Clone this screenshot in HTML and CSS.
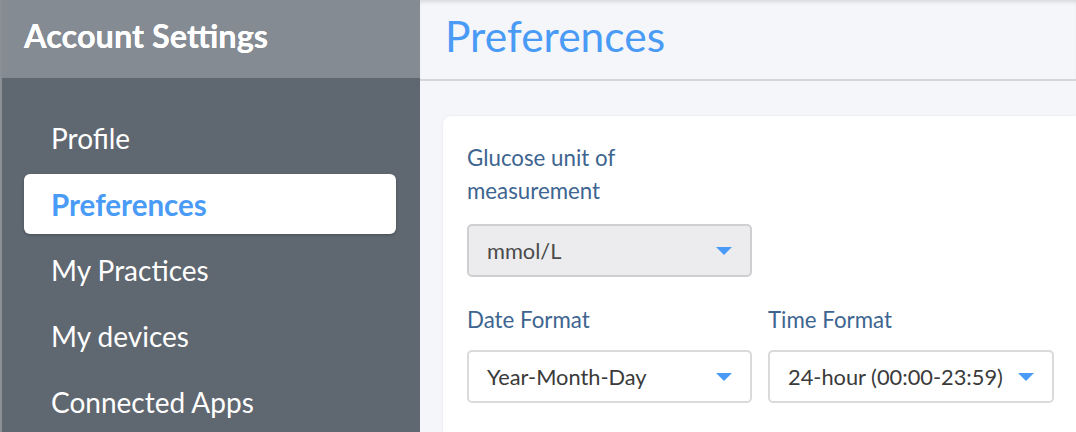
FILE: index.html
```html
<!DOCTYPE html>
<html lang="en">
<head>
<meta charset="utf-8">
<title>Preferences</title>
<link rel="stylesheet" href="styles.css">
</head>
<body>
<div class="app">
  <aside class="sidebar">
    <div class="sidebar-header">Account Settings</div>
    <nav class="nav">
      <a class="nav-item">Profile</a>
      <a class="nav-item active">Preferences</a>
      <a class="nav-item">My Practices</a>
      <a class="nav-item">My devices</a>
      <a class="nav-item">Connected Apps</a>
    </nav>
  </aside>
  <main class="main">
    <header class="page-header"><h1 class="page-title">Preferences</h1></header>
    <section class="content">
      <div class="card">
        <div class="field field-glucose">
          <label class="field-label narrow">Glucose unit of measurement</label>
          <div class="select disabled"><span>mmol/L</span><span class="caret"></span></div>
        </div>
        <div class="row">
          <div class="field">
            <label class="field-label">Date Format</label>
            <div class="select"><span>Year-Month-Day</span><span class="caret"></span></div>
          </div>
          <div class="field">
            <label class="field-label">Time Format</label>
            <div class="select wide"><span>24-hour (00:00-23:59)</span><span class="caret"></span></div>
          </div>
        </div>
      </div>
    </section>
  </main>
</div>
</body>
</html>
```

FILE: styles.css
```css
* { box-sizing: border-box; }
html, body { margin: 0; padding: 0; }
body {
  font-family: Lato, "Open Sans", sans-serif;
  width: 1076px;
  height: 432px;
  overflow: hidden;
  background: #f5f6fa;
}
.app {
  display: flex;
  height: 432px;
  overflow: hidden;
}
.sidebar {
  width: 420px;
  flex: none;
  background: #5f6770;
  border-left: 2px solid #8a8f96;
  display: flex;
  flex-direction: column;
}
.sidebar-header {
  height: 78px;
  flex: none;
  background: #858b93;
  color: #fff;
  font-weight: 700;
  font-size: 32.5px;
  padding: 0 0 8px 22px;
  display: flex;
  align-items: center;
  text-shadow: 0 0 0.6px #fff;
}
.nav {
  padding-top: 30px;
  display: flex;
  flex-direction: column;
  gap: 6px;
}
.nav-item {
  height: 60px;
  flex: none;
  margin: 0 24px 0 22px;
  padding-left: 27px;
  display: flex;
  align-items: center;
  color: #fff;
  font-size: 28px;
  border-radius: 6px;
}
.nav-item.active {
  background: #fff;
  color: #4a9bf5;
  font-weight: 700;
  font-size: 29.5px;
  box-shadow: 0 1px 3px rgba(0,0,0,0.25);
}
.main {
  flex: 1;
  display: flex;
  flex-direction: column;
  min-width: 0;
  overflow: hidden;
}
.page-header {
  height: 81px;
  flex: none;
  border-bottom: 2px solid #d5d6da;
  box-shadow: inset 0 4px 4px -2px rgba(0,0,0,0.12);
  padding-left: 25px;
  display: flex;
  align-items: center;
}
.page-title {
  margin: 0;
  font-weight: 400;
  font-size: 42.5px;
  color: #4a9bf5;
  padding-bottom: 8px;
}
.content {
  padding: 35px 0 0 23px;
  flex: 1;
  min-height: 0;
}
.card {
  background: #fff;
  border-radius: 8px 0 0 0;
  box-shadow: 0 0 3px rgba(0,0,0,0.08);
  padding: 25px 0 0 24px;
  height: 100%;
}
.field {
  display: flex;
  flex-direction: column;
}
.field-label {
  color: #3d6590;
  font-size: 22.3px;
  line-height: 33px;
}
.field-label.narrow { max-width: 200px; }
.field-glucose .select { margin-top: 17px; }
.row {
  display: flex;
  gap: 16px;
  margin-top: 26px;
}
.row .select { margin-top: 14px; }
.select {
  width: 285px;
  height: 53px;
  border: 2px solid #dadada;
  border-radius: 5px;
  background: #fff;
  display: flex;
  align-items: center;
  justify-content: space-between;
  padding: 0 18px 0 18px;
  color: #3a3a3a;
  font-size: 21.8px;
}
.select.wide { width: 286px; }
.select.disabled {
  background: #ececee;
  border-color: #cfcfd1;
  color: #4a4a4a;
}
.caret {
  width: 0;
  height: 0;
  border-left: 8px solid transparent;
  border-right: 8px solid transparent;
  border-top: 8px solid #4a9bf5;
}
```
